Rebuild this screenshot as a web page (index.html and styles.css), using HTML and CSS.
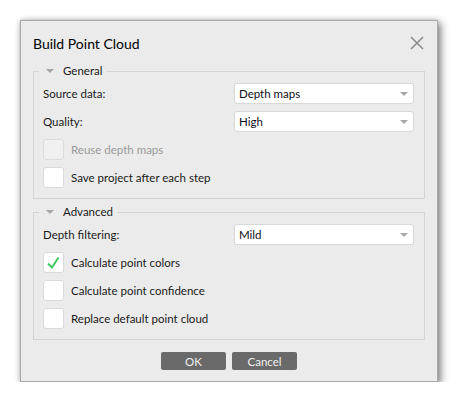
FILE: index.html
```
<!DOCTYPE html>
<html lang="en">
<head>
    <meta charset="UTF-8">
    <title>Build Point Cloud</title>
    <link rel="stylesheet" href="styles.css">
</head>
<body>
    <div class="dialog">
        <div class="title-bar">
            <span class="title">Build Point Cloud</span>
            <svg class="close" width="14" height="14" viewBox="0 0 14 14">
                <path d="M1 1L13 13M13 1L1 13" stroke="#8c8c8c" stroke-width="1.6" fill="none"/>
            </svg>
        </div>

        <fieldset class="group">
            <legend><span class="arrow"></span>General</legend>
            <div class="row">
                <label>Source data:</label>
                <div class="select">Depth maps<span class="caret"></span></div>
            </div>
            <div class="row">
                <label>Quality:</label>
                <div class="select">High<span class="caret"></span></div>
            </div>
            <div class="check disabled">
                <span class="box"></span>Reuse depth maps
            </div>
            <div class="check">
                <span class="box"></span>Save project after each step
            </div>
        </fieldset>

        <fieldset class="group">
            <legend><span class="arrow"></span>Advanced</legend>
            <div class="row">
                <label>Depth filtering:</label>
                <div class="select">Mild<span class="caret"></span></div>
            </div>
            <div class="check">
                <span class="box">
                    <svg width="19" height="19" viewBox="0 0 19 19">
                        <path d="M4 10.5L8 14.5L14.5 4.5" stroke="#3fc85c" stroke-width="2" fill="none"/>
                    </svg>
                </span>Calculate point colors
            </div>
            <div class="check">
                <span class="box"></span>Calculate point confidence
            </div>
            <div class="check">
                <span class="box"></span>Replace default point cloud
            </div>
        </fieldset>

        <div class="buttons">
            <button>OK</button>
            <button>Cancel</button>
        </div>
    </div>
</body>
</html>
```

FILE: styles.css
```
* {
    box-sizing: border-box;
}
body {
    margin: 0;
    background: #fff;
    font-family: Lato, "Open Sans", sans-serif;
    font-size: 11.5px;
    color: #1a1a1a;
}
.dialog {
    margin: 20px 0 0 20px;
    width: 418px;
    height: 362px;
    background: #ebebeb;
    border: 1px solid #a9a9a9;
    box-shadow: 3px 3px 8px rgba(0, 0, 0, 0.45), 0 0 5px rgba(0, 0, 0, 0.2);
    padding: 0 12px;
}
.title-bar {
    height: 43px;
    display: flex;
    align-items: center;
    justify-content: space-between;
    padding: 0 1px 0 0;
}
.title {
    font-size: 14px;
    color: #000;
    margin-top: 1px;
}
.group {
    margin: 0;
    border: 1px solid #d4d4d4;
    padding: 5px 10px 10px 9px;
    display: flex;
    flex-direction: column;
    gap: 7px;
}
.group + .group {
    margin-top: 6px;
}
legend {
    margin-left: -4px;
    padding: 0 5px 0 7px;
    line-height: 14px;
    font-size: 11.5px;
    display: flex;
    align-items: center;
}
.arrow {
    width: 0;
    height: 0;
    border-left: 4px solid transparent;
    border-right: 4px solid transparent;
    border-top: 4px solid #a6a6a6;
    margin-right: 9px;
}
.row {
    display: flex;
    justify-content: space-between;
    align-items: center;
    height: 21px;
}
.select {
    width: 180px;
    height: 21px;
    background: #fff;
    border: 1px solid #d8d8d8;
    border-radius: 3px;
    padding: 0 4px;
    display: flex;
    align-items: center;
    justify-content: space-between;
    color: #0c0c20;
}
.caret {
    width: 0;
    height: 0;
    border-left: 4px solid transparent;
    border-right: 4px solid transparent;
    border-top: 4px solid #a8a8a8;
    margin-right: 1px;
}
.check {
    display: flex;
    align-items: center;
    height: 21px;
}
.box {
    width: 21px;
    height: 21px;
    background: #fff;
    border: 1px solid #dadada;
    border-radius: 3px;
    margin-right: 7px;
    display: flex;
    align-items: center;
    justify-content: center;
}
.check.disabled {
    color: #9a9a9a;
}
.check.disabled .box {
    background: #f0f0f0;
    border-color: #dcdcdc;
}
.buttons {
    display: flex;
    justify-content: center;
    gap: 6px;
    margin-top: 12px;
}
button {
    width: 65px;
    height: 18px;
    background: #6a6a6a;
    border: none;
    border-radius: 2px;
    color: #f2f2f2;
    font-family: inherit;
    font-size: 11.5px;
    padding: 0;
}
```
